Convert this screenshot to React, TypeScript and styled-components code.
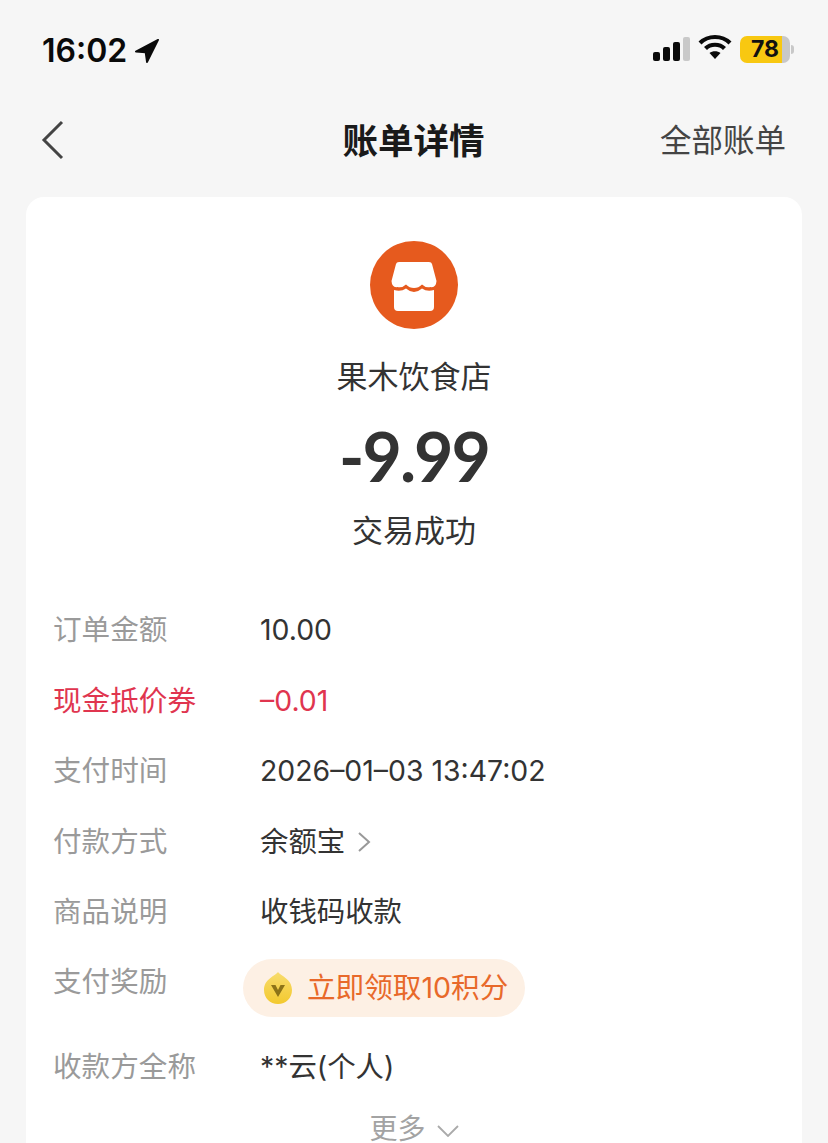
import React from "react";
import styled, { createGlobalStyle } from "styled-components";

const Global = createGlobalStyle`
  html, body { margin: 0; padding: 0; background: #f6f6f6; }
  body { font-family: "Inter", "Liberation Sans", "Noto Sans CJK SC", sans-serif; }
  * { box-sizing: border-box; }
`;
const CJK = `"Noto Sans CJK SC", "Noto Sans", sans-serif`;
const Latin = `"Inter", "Noto Sans CJK SC", sans-serif`;

const Page = styled.div`
  width: 828px; height: 1143px; overflow: hidden; background: #f6f6f6;
  display: flex; flex-direction: column;
`;
const StatusBar = styled.div`
  flex: none; height: 92px; padding: 26px 34px 0 42px; display: flex; align-items: flex-start; justify-content: space-between;
`;
const TimeGroup = styled.div`display: flex; align-items: center; gap: 8px; height: 46px; margin-top: 2px;`;
const Time = styled.span`font: 600 32px/46px "Inter", sans-serif; color: #0a0a0a; letter-spacing: 0;`;
const StatusRight = styled.div`display: flex; align-items: center; height: 46px;`;
const SignalIcon = styled.svg`display: block; margin-right: 8px;`;
const WifiIcon = styled.svg`display: block; margin: -4px 8px 0 0;`;
const BatteryWrap = styled.div`display: flex; align-items: center;`;
const Battery = styled.div`
  width: 50px; height: 27px; border-radius: 7px; display: flex; align-items: center; justify-content: center;
  background: linear-gradient(to right, #f8c811 0 84%, #c8c8c8 84% 100%);
  font: 700 23px/27px "Inter", sans-serif; color: #111;
`;
const BatteryCap = styled.div`width: 3px; height: 9px; margin-left: 1px; border-radius: 0 3px 3px 0; background: #c8c8c8;`;

const NavBar = styled.div`
  flex: none; height: 105px; padding: 0 42px 0 41px; display: grid; grid-template-columns: 1fr auto 1fr; align-items: center;
`;
const Title = styled.div`font: 600 35.5px/46px ${CJK}; color: #1a1a1a; margin-top: -12px;`;
const NavLink = styled.div`font: 400 31.5px/44px ${CJK}; color: #444; justify-self: end; margin-top: -14px;`;
const BackIcon = styled.svg`display: block; margin-top: -9px;`;

const Card = styled.div`
  margin: 0 26px; flex: 1; min-height: 0; background: #fff; border-radius: 18px 18px 0 0; padding-top: 44px;
  display: flex; flex-direction: column;
`;
const Head = styled.div`display: flex; flex-direction: column; align-items: center;`;
const Merchant = styled.div`font: 400 31px/44px ${CJK}; color: #333; margin-top: 24px;`;
const Amount = styled.div`font: 700 68px/80px "Lato", sans-serif; color: #333; margin-top: 19px; letter-spacing: -2px;`;
const Status = styled.div`font: 400 31px/44px ${CJK}; color: #333; margin-top: 11px;`;

const Rows = styled.div`margin-top: 55px; padding-left: 27px; display: flex; flex-direction: column;`;
const Row = styled.div<{ $h: number }>`flex: none; height: ${p => p.$h}px; display: flex; align-items: flex-start;`;
const Label = styled.div<{ $red?: boolean }>`
  width: 207px; flex: none; font: 400 28.6px/44px ${CJK}; color: ${p => (p.$red ? "#e0354f" : "#9a9a9a")};
`;
const Value = styled.div<{ $red?: boolean }>`
  font: 400 28.4px/44px ${Latin}; color: ${p => (p.$red ? "#e0354f" : "#333")}; margin-top: 2px;
  display: flex; align-items: center; gap: 12px;
`;
const Reward = styled.div`
  margin: 1px 0 0 -17px; height: 58px; width: 282px; border-radius: 29px; background: #fdf0e4;
  display: flex; align-items: center; padding-left: 20px; gap: 14px;
  font: 400 28.6px/44px ${Latin}; color: #e8692a;
`;
const More = styled.div`
  flex: none; display: flex; justify-content: center; align-items: center; gap: 11px; margin-top: 8px;
  font: 400 28px/32px ${CJK}; color: #a3a3a3;
`;
const MoreChevron = styled.svg`display: block; margin-top: 8px;`;

export default function App() {
  return (
    <Page>
      <Global />
      <StatusBar>
        <TimeGroup>
          <Time>16:02</Time>
          <svg width="24" height="24" viewBox="0 0 26 26"><path d="M25 1 L1 13.5 L11.5 14.5 L13 25 Z" fill="#0a0a0a" stroke="#0a0a0a" strokeWidth="2" strokeLinejoin="round" /></svg>
        </TimeGroup>
        <StatusRight>
          <SignalIcon width="37" height="24" viewBox="0 0 37 24">
            <rect x="0" y="15" width="7" height="9" rx="2" fill="#0a0a0a" />
            <rect x="10" y="10" width="7" height="14" rx="2" fill="#0a0a0a" />
            <rect x="20" y="5" width="7" height="19" rx="2" fill="#0a0a0a" />
            <rect x="30" y="0" width="7" height="24" rx="2" fill="#c9c9c9" />
          </SignalIcon>
          <WifiIcon width="34" height="26" viewBox="0 0 34 26">
            <path d="M2 9 C10 1 24 1 32 9 M7.5 14.5 C12.5 9.5 21.5 9.5 26.5 14.5" fill="none" stroke="#0a0a0a" strokeWidth="4.2" strokeLinecap="butt" />
            <path d="M17 25 L11.5 19 C14.5 16.6 19.5 16.6 22.5 19 Z" fill="#0a0a0a" />
          </WifiIcon>
          <BatteryWrap>
            <Battery>78</Battery>
            <BatteryCap />
          </BatteryWrap>
        </StatusRight>
      </StatusBar>
      <NavBar>
        <BackIcon width="24" height="40" viewBox="0 0 24 40">
          <path d="M21 2 L3 20 L21 38" fill="none" stroke="#444" strokeWidth="3" />
        </BackIcon>
        <Title>账单详情</Title>
        <NavLink>全部账单</NavLink>
      </NavBar>
      <Card>
        <Head>
          <svg width="88" height="88" viewBox="0 0 88 88">
            <circle cx="44" cy="44" r="44" fill="#e65a1e" />
            <path d="M26 23 Q26.500 21 29 21 H59 Q61.500 21 62 23 L66.500 40 Q66 47 60.500 46 Q55.500 47 52 43.500 Q48.500 47 44 47 Q39.500 47 36 43.500 Q32.500 47 27.500 46 Q22 47 21.500 40 Z" fill="#fff" />
            <path d="M24 49 Q31 51 36 47.500 Q40 51 44 51 Q48 51 52 47.500 Q57 51 64 49 V66 Q64 70 60 70 H28 Q24 70 24 66 Z" fill="#fff" />
          </svg>
          <Merchant>果木饮食店</Merchant>
          <Amount>-9.99</Amount>
          <Status>交易成功</Status>
        </Head>
        <Rows>
          <Row $h={71}><Label>订单金额</Label><Value>10.00</Value></Row>
          <Row $h={70}><Label $red>现金抵价券</Label><Value $red>–0.01</Value></Row>
          <Row $h={71}><Label>支付时间</Label><Value>2026–01–03 13:47:02</Value></Row>
          <Row $h={70}><Label>付款方式</Label>
            <Value>余额宝
              <svg width="14" height="22" viewBox="0 0 14 22"><path d="M2 2 L12 11 L2 20" fill="none" stroke="#999" strokeWidth="2" /></svg>
            </Value>
          </Row>
          <Row $h={70}><Label>商品说明</Label><Value>收钱码收款</Value></Row>
          <Row $h={85}><Label>支付奖励</Label>
            <Reward>
              <svg width="30" height="34" viewBox="0 0 30 34">
                <defs><linearGradient id="g" x1="0" y1="0" x2="0" y2="1"><stop offset="0" stopColor="#f8dc6e" /><stop offset="1" stopColor="#f3c92e" /></linearGradient></defs>
                <path d="M15 1 C18 5 29 8 29 19 C29 27 23 33 15 33 C7 33 1 27 1 19 C1 8 12 5 15 1 Z" fill="url(#g)" />
                <path d="M8 14 H12.500 L15 19 L17.500 14 H22 L15 26 Z" fill="#8d7318" />
              </svg>
              立即领取10积分
            </Reward>
          </Row>
          <Row $h={60}><Label>收款方全称</Label><Value>**云(个人)</Value></Row>
        </Rows>
        <More>更多
          <MoreChevron width="22" height="12" viewBox="0 0 22 12"><path d="M1 1 L11 11 L21 1" fill="none" stroke="#aaa" strokeWidth="1.800" /></MoreChevron>
        </More>
      </Card>
    </Page>
  );
}
